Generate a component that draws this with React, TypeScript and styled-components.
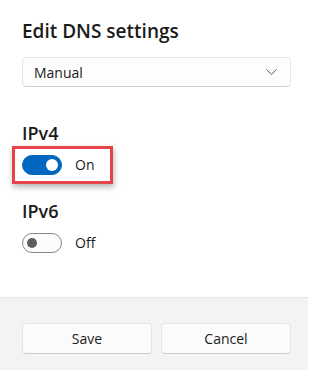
import React from "react";
import styled, { createGlobalStyle } from "styled-components";

interface IToggle {
  on?: boolean;
}

interface IRow {
  highlight?: boolean;
}

const GlobalStyle = createGlobalStyle`
  html, body {
    margin: 0;
    padding: 0;
    background: #fff;
  }
  body {
    font-family: "Open Sans", "Noto Sans", sans-serif;
    color: #1b1b1b;
  }
`;

const Dialog = styled.div`
  width: 308px;
  height: 370px;
  display: flex;
  flex-direction: column;
  background: #fff;
`;
const Content = styled.main`
  flex: 1;
  padding: 17px 17px 0 22px;
`;
const Title = styled.h1`
  margin: 0;
  font-size: 19px;
  font-weight: 600;
  line-height: 28px;
  color: #1b1b1b;
`;
const Select = styled.div`
  margin-top: 12px;
  height: 30px;
  box-sizing: border-box;
  display: flex;
  align-items: center;
  justify-content: space-between;
  padding: 0 13px 0 11px;
  background: #fdfdfd;
  border: 1px solid #e6e6e6;
  border-bottom-color: #cfcfcf;
  border-radius: 4px;
  font-size: 14px;
  color: #1b1b1b;
`;
const Section = styled.section`
  margin-top: 34px;

  & + & {
    margin-top: 15px;
  }
`;
const Heading = styled.h2`
  margin: 0;
  font-size: 18px;
  font-weight: 600;
  line-height: 24px;
  color: #1b1b1b;
`;
const Row = styled.div<IRow>`
  margin: 1px 0 0 -10px;
  display: inline-flex;
  align-items: center;
  gap: 13px;
  padding: 6px 16px 6px 7px;
  border: 3px solid ${({ highlight }) => (highlight ? "#e9434a" : "transparent")};
  box-shadow: ${({ highlight }) => (highlight ? "1px 3px 6px rgba(0, 0, 0, 0.3)" : "none")};
  font-size: 14px;
  line-height: 20px;
`;
const Toggle = styled.span<IToggle>`
  position: relative;
  width: 40px;
  height: 20px;
  box-sizing: border-box;
  border-radius: 10px;
  background: ${({ on }) => (on ? "#0067c0" : "#fbfbfb")};
  border: 1px solid ${({ on }) => (on ? "#0067c0" : "#878787")};

  &::after {
    content: "";
    position: absolute;
    top: 50%;
    width: ${({ on }) => (on ? "12px" : "10px")};
    height: ${({ on }) => (on ? "12px" : "10px")};
    border-radius: 50%;
    transform: translateY(-50%);
    background: ${({ on }) => (on ? "#fff" : "#5d5d5d")};
    ${({ on }) => (on ? "right: 3px;" : "left: 4px;")}
  }
`;
const Footer = styled.footer`
  height: 73px;
  box-sizing: border-box;
  border-top: 1px solid #e5e5e5;
  background: #f3f3f3;
  display: grid;
  grid-template-columns: 1fr 1fr;
  gap: 9px;
  padding: 25px 17px 0 22px;
  align-items: start;
`;
const Button = styled.button`
  height: 31px;
  background: #fbfbfb;
  border: 1px solid #e5e5e5;
  border-bottom-color: #cccccc;
  border-radius: 4px;
  font-family: inherit;
  font-size: 14px;
  color: #1b1b1b;
`;

const Chevron = () => (
  <svg width="11" height="6" viewBox="0 0 11 6" fill="none">
    <path d="M0.5 0.5 L5.5 5.3 L10.5 0.5" stroke="#555" strokeWidth="1" />
  </svg>
);

const App: React.FC = () => {
  return (
    <Dialog>
      <GlobalStyle />
      <Content>
        <Title>Edit DNS settings</Title>
        <Select>
          Manual
          <Chevron />
        </Select>
        <Section>
          <Heading>IPv4</Heading>
          <Row highlight>
            <Toggle on />
            On
          </Row>
        </Section>
        <Section>
          <Heading>IPv6</Heading>
          <Row>
            <Toggle />
            Off
          </Row>
        </Section>
      </Content>
      <Footer>
        <Button>Save</Button>
        <Button>Cancel</Button>
      </Footer>
    </Dialog>
  );
};

export default App;
